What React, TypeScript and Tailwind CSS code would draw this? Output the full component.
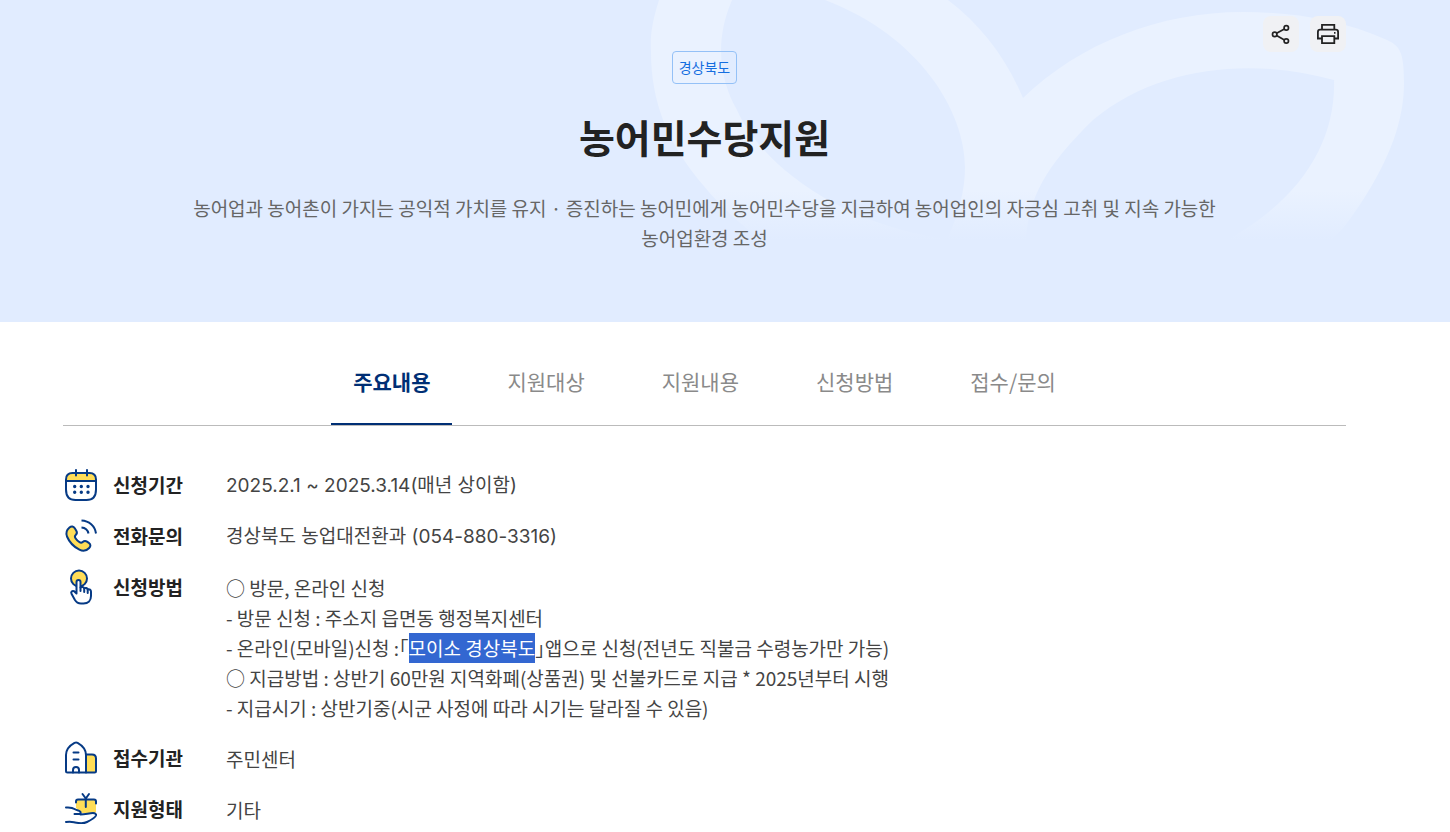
import { useState } from "react";

const tabs = ["주요내용", "지원대상", "지원내용", "신청방법", "접수/문의"];

function CalendarIcon() {
  return (
    <svg viewBox="0 0 36 36" className="h-9 w-9" fill="none" stroke="#063a85" strokeWidth="2" strokeLinecap="round" aria-hidden="true">
      <path d="M3 14v-2.500C3 7.500 5.500 5.500 9.500 5.500h17c4 0 6.500 2 6.500 6V14z" fill="#ffdd57" stroke="none" />
      <path d="M3 12.500c0-4.500 2.200-6.500 6.500-6.500h17c4.300 0 6.500 2 6.500 6.500v10c0 7.500-3 10.500-9.500 10.500h-11C6 33 3 30 3 22.500z" />
      <path d="M3 14h30M13 3v5.500M24 3v5.500" />
      <path d="M11.700 19.500h.01M18.300 19.500h.01M25 19.500h.01M11.700 25.300h.01M18.300 25.300h.01M25 25.300h.01" strokeWidth="3.400" />
    </svg>
  );
}

function PhoneIcon() {
  return (
    <svg viewBox="0 0 36 36" className="h-9 w-9" fill="none" stroke="#063a85" strokeWidth="2" strokeLinecap="round" strokeLinejoin="round" aria-hidden="true">
      <path
        d="M6.500 9.500c2-1.700 4-1.200 5.300.8l1.500 2.400c1.100 1.800.8 3-.6 4.300-1 .9-1 2-.2 3.200 1 1.500 2.400 3 4 4 1.200.8 2.200.7 3.200-.2 1.400-1.300 2.700-1.400 4.300-.4l1.800 1.200c2 1.300 2.100 3.400.4 5.200-2.600 2.800-6.200 3.500-9.800 1.700C10.500 28.700 6.300 24 4 18.500c-1.300-3.500-.4-6.600 2.500-9z"
        fill="#ffdd57"
      />
      <path d="M18.500 2.500c7.500.3 13.500 5.500 14.500 13M18.500 9.500c3.800.3 6.200 2.500 7 6" strokeLinecap="butt" />
    </svg>
  );
}

function TouchIcon() {
  return (
    <svg viewBox="0 0 36 36" className="h-9 w-9" fill="none" stroke="#063a85" strokeWidth="2" strokeLinecap="round" strokeLinejoin="round" aria-hidden="true">
      <circle cx="16" cy="9.500" r="8" fill="#ffdd57" />
      <path
        d="M13.500 24.500V13c0-2.800 4-2.800 4 0v5.500c1.200-1 3.300-.8 3.700.8 1.300-.8 3.100-.3 3.500 1.200 1.800-.6 3.300.3 3.300 2.300v4.200c0 4.500-2.800 7.500-7.500 7.500h-2.500c-3 0-4.800-1.300-6.200-3.700l-3.300-6c-1-1.900.8-3.500 2.600-2.600z"
        fill="#fff"
      />
      <path d="M17.500 18.500V22M21.200 19.500V23M24.700 20.500V24" />
    </svg>
  );
}

function BuildingIcon() {
  return (
    <svg viewBox="0 0 36 36" className="h-9 w-9" fill="none" stroke="#063a85" strokeWidth="2" strokeLinecap="round" strokeLinejoin="round" aria-hidden="true">
      <path d="M23 14.500h6c2.500 0 4 1.200 4 4v12.500c0 1-.5 1.500-1.500 1.500H23z" fill="#ffdd57" />
      <path d="M4.500 32.500c-1 0-1.500-.5-1.500-1.500V15C3 8.500 7.500 5 11.500 2.800c1.200-.6 2-.6 3.100 0C18.500 5 23 8.500 23 15v17.500z" />
      <path d="M10.500 12.500h5M10.500 19.500h5M10 32.500V30c0-4 6-4 6 0v2.500" />
    </svg>
  );
}

function GiftIcon() {
  return (
    <svg viewBox="0 0 36 36" className="h-9 w-9" fill="none" stroke="#063a85" strokeWidth="2" strokeLinecap="round" strokeLinejoin="round" aria-hidden="true">
      <path d="M14 8.500h17c1.500 0 2 .5 2 2V20c0 1.500-.5 2-2 2H19l-6-5v-7c0-1 .2-1.500 1-1.500z" fill="#ffdd57" stroke="none" />
      <path d="M13 11.500v-1c0-1.300.7-2 2-2h16c1.300 0 2 .7 2 2v2M22.800 8.500V16M19.500 3l3.300 4.500L26 3" />
      <path d="M3 16.500c3.500-.3 6.500 0 9 1.800 1.500 1.200 4.500 1 5.500 2.700.6 1.400-.5 2-2 2h-4M17.500 23.500c5-.2 9-1.500 12.500-1.500 2 0 3.500 1 3 2.500-.6 1.500-5 4.500-9 6.500-4.500 2.200-9 1-13 .2-3-.6-5-.5-8-.2" />
    </svg>
  );
}

const rows = [
  { icon: CalendarIcon, label: "신청기간", body: <p className="font-['Inter','Noto_Sans_CJK_KR',sans-serif]">2025.2.1 ~ 2025.3.14(매년 상이함)</p> },
  { icon: PhoneIcon, label: "전화문의", body: <p className="font-['Inter','Noto_Sans_CJK_KR',sans-serif]">경상북도 농업대전환과 (054-880-3316)</p> },
  {
    icon: TouchIcon,
    label: "신청방법",
    body: (
      <>
        <p>○ 방문, 온라인 신청</p>
        <p>- 방문 신청 : 주소지 읍면동 행정복지센터</p>
        <p className="[font-feature-settings:'halt']">
          - 온라인(모바일)신청 :「<mark className="inline-block bg-[#3367d1] text-white">모이소 경상북도</mark>」앱으로 신청(전년도 직불금 수령농가만 가능)
        </p>
        <p>○ 지급방법 : 상반기 60만원 지역화폐(상품권) 및 선불카드로 지급 * 2025년부터 시행</p>
        <p>- 지급시기 : 상반기중(시군 사정에 따라 시기는 달라질 수 있음)</p>
      </>
    ),
  },
  { icon: BuildingIcon, label: "접수기관", body: <p>주민센터</p> },
  { icon: GiftIcon, label: "지원형태", body: <p>기타</p> },
];

export default function App() {
  const [active, setActive] = useState(0);

  return (
    <main className="min-h-screen overflow-hidden bg-white font-['Noto_Sans_CJK_KR',sans-serif] text-[#222]">
      <header className="relative bg-[#e1ecff] pt-[51px] pr-[104px] pb-[69px] pl-[63px]">
        <svg viewBox="0 0 770 240" className="absolute top-0 right-[40px] h-[240px] w-[770px]" aria-hidden="true">
          <defs>
            <linearGradient id="petal" x1="0" y1="190" x2="0" y2="240" gradientUnits="userSpaceOnUse">
              <stop offset="0" stopColor="#eaf2ff" />
              <stop offset="1" stopColor="#eaf2ff" stopOpacity="0" />
            </linearGradient>
          </defs>
          <path
            fill="url(#petal)"
            fillRule="evenodd"
            d="M19 0C12 22 10 36 11 52C11 102 28 144 63 185C82 208 102 226 122 240H692C706 226 713 215 723 200C750 158 764 120 764 83C764 52 760 46 747 40C700 19 650 12 603 12C520 12 440 43 383 98C366 58 342 26 308 0ZM92 0C74 42 80 80 97 110C120 162 195 222 300 238L307 240C318 215 325 192 325 167C325 112 280 36 185 0ZM386 240C389 197 405 167 453 120C520 64 615 58 694 80C696 142 660 200 587 240Z"
          />
        </svg>
        <div className="absolute top-4 right-[104px] flex gap-[11px]">
          <button type="button" aria-label="공유" className="flex h-9 w-9 items-center justify-center rounded-lg bg-[#f0f1f4]">
            <svg viewBox="0 0 24 24" className="h-6 w-6" fill="none" stroke="#222" strokeWidth="1.700" aria-hidden="true">
              <circle cx="5.700" cy="12.400" r="2.200" />
              <circle cx="17.300" cy="5.900" r="2.200" />
              <circle cx="17.300" cy="19" r="2.200" />
              <path d="M7.600 11.300l7.800-4.300M7.600 13.500l7.800 4.400" />
            </svg>
          </button>
          <button type="button" aria-label="인쇄" className="flex h-9 w-9 items-center justify-center rounded-lg bg-[#f0f1f4]">
            <svg viewBox="0 0 24 24" className="h-6 w-6" fill="none" stroke="#222" strokeWidth="1.800" aria-hidden="true">
              <path d="M6 8V2.900h12.300V8M6 16.500H1.900V10C1.900 8.600 2.800 7.700 4.200 7.700h15.600c1.400 0 2.300.9 2.300 2.300v6.500h-3.800" />
              <path d="M6 14.200h12.300v6.900H6z" />
              <path d="M18 10.800h1.500" />
            </svg>
          </button>
        </div>
        <div className="relative mx-auto flex max-w-[1040px] flex-col items-center text-center">
          <span className="rounded border border-[#94c1f7] px-1.5 text-[14px] leading-[31px] text-[#146ee0]">경상북도</span>
          <h1 className="mt-[22px] text-[39px] leading-[60px] font-bold">농어민수당지원</h1>
          <p className="mt-[27px] text-[19px] leading-[30px] break-keep text-[#666]">
            농어업과 농어촌이 가지는 공익적 가치를 유지 · 증진하는 농어민에게 농어민수당을 지급하여 농어업인의 자긍심 고취 및 지속 가능한 농어업환경 조성
          </p>
        </div>
      </header>

      <div className="pr-[104px] pl-[63px]">
        <div role="tablist" className="mt-[22px] flex justify-center gap-[33px] border-b border-[#bbb]">
          {tabs.map((tab, i) => (
            <button
              key={tab}
              type="button"
              role="tab"
              aria-selected={i === active}
              onClick={() => setActive(i)}
              className={
                i === active
                  ? "h-[81px] border-b-2 border-[#002f75] px-[22px] pb-1 text-[21px] font-bold text-[#002f75]"
                  : "h-[81px] border-b-2 border-transparent px-[22px] pb-1 text-[21px] text-[#8a8a8a]"
              }
            >
              {tab}
            </button>
          ))}
        </div>

        <dl className="mt-[41px] flex flex-col gap-[15px] text-[19px]">
          {rows.map(({ icon: Icon, label, body }) => (
            <div key={label} className="flex items-start">
              <dt className="flex w-[163px] shrink-0 items-center gap-[14px] leading-[36px] font-bold">
                <Icon />
                {label}
              </dt>
              <dd className="pt-1 pb-[2px] leading-[30px] text-[#444]">{body}</dd>
            </div>
          ))}
        </dl>
      </div>
    </main>
  );
}
